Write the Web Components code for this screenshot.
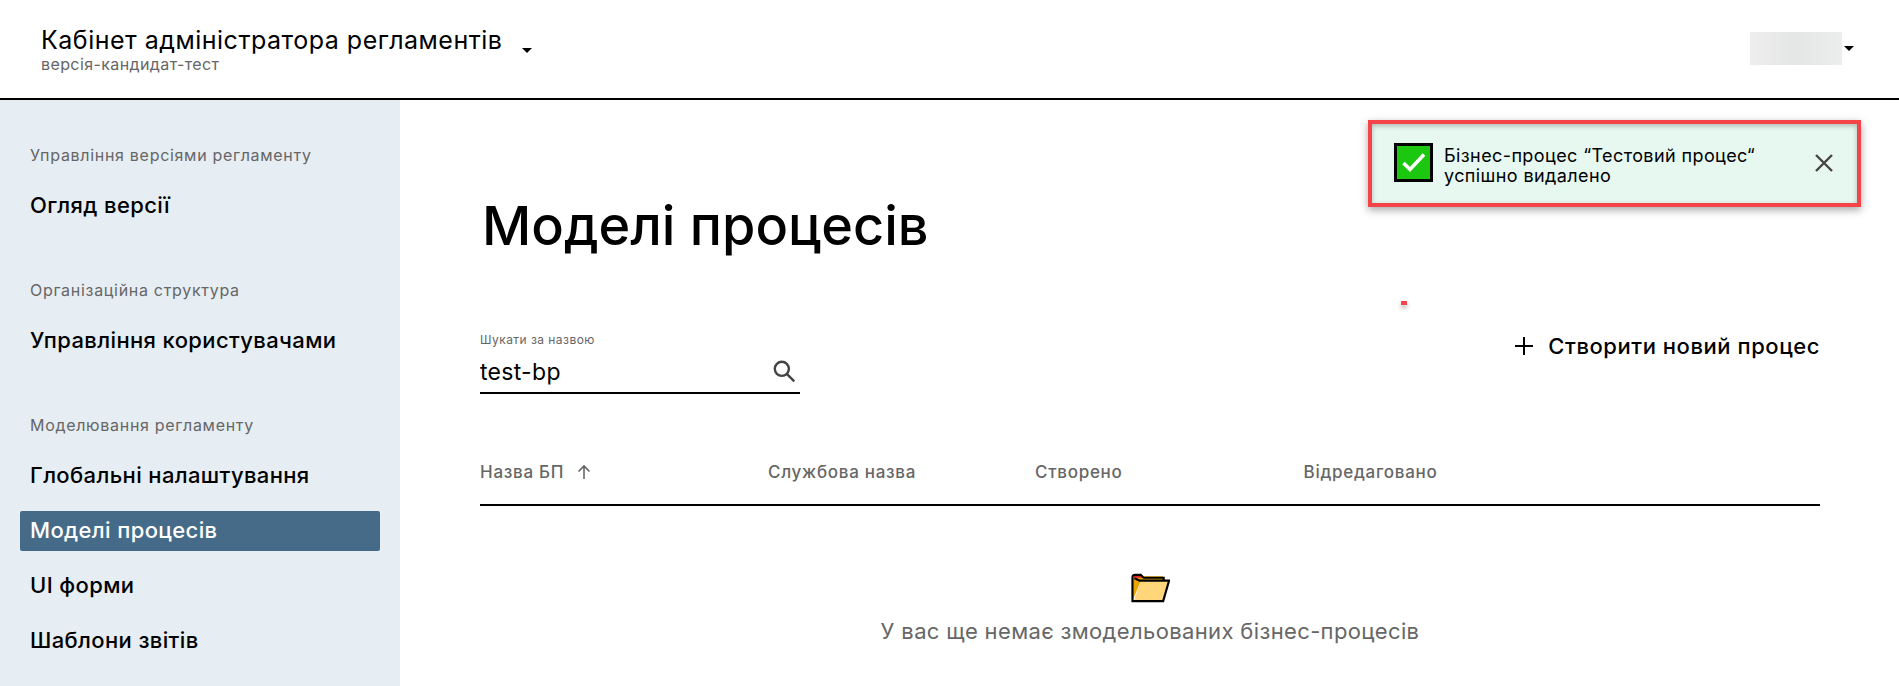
<!DOCTYPE html>
<html lang="uk"><head><meta charset="utf-8"><title>Моделі процесів</title>
<style>
html,body{margin:0;height:686px;overflow:hidden;background:#fff;font-family:Inter,"Noto Sans",sans-serif;}
</style></head><body>
<app-shell>
  <app-header slot="header"></app-header>
  <side-nav slot="side"></side-nav>
  <process-page slot="main"></process-page>
  <toast-note slot="over"></toast-note>
</app-shell>
<script>
const F='Inter,"Noto Sans",sans-serif';
function def(name,html){customElements.define(name,class extends HTMLElement{constructor(){super();this.attachShadow({mode:'open'}).innerHTML=html(this);}});}
def('app-shell',()=>`<style>:host{display:grid;grid-template:100px 586px/400px 1fr;width:1899px;height:686px;position:relative;overflow:hidden}
::slotted([slot=header]){grid-column:1/3}</style>
<slot name="header"></slot><slot name="side"></slot><slot name="main"></slot><slot name="over"></slot>`);
def('app-header',()=>`<style>:host{display:flex;box-sizing:border-box;height:100px;border-bottom:2px solid #000;align-items:flex-start;padding:0 45px 0 41px;justify-content:space-between;font-family:${F}}
.l{display:flex;padding-top:25px}.t{font-size:25px;line-height:30px;color:#000;letter-spacing:.5px}.s{font-size:16px;line-height:18px;color:#666;letter-spacing:.4px}
.c{width:0;height:0;border:5px solid transparent;border-top-color:#000;border-bottom:0}
.l .c{margin:23px 0 0 20px}.r{display:flex;align-items:center;padding-top:32px;gap:2px}
.a{width:92px;height:33px;background:linear-gradient(90deg,#eeeeee,#e4e5e5 50%,#eceded)}</style>
<div class="l"><div><div class="t">Кабінет адміністратора регламентів</div><div class="s">версія-кандидат-тест</div></div><i class="c"></i></div>
<div class="r"><div class="a"></div><i class="c"></i></div>`);
def('nav-group',e=>`<style>:host{display:block;margin-bottom:54px}.h{font-size:16px;line-height:20px;color:#666;padding-left:10px;margin-bottom:21px;letter-spacing:.7px}
.b{display:flex;flex-direction:column;gap:15px}</style><div class="h">${e.getAttribute('label')}</div><div class="b"><slot></slot></div>`);
def('nav-item',e=>`<style>:host{display:block}div{height:40px;line-height:39px;padding-left:10px;font-size:22px;letter-spacing:.37px;font-weight:500;color:#000;border-radius:2px}
:host([active]) div{background:#466b88;color:#fff}</style><div><slot></slot></div>`);
def('side-nav',()=>`<style>:host{display:block;box-sizing:border-box;height:586px;background:#e6edf3;padding:45px 20px 0;font-family:${F};overflow:hidden}</style>
<nav-group label="Управління версіями регламенту"><nav-item>Огляд версії</nav-item></nav-group>
<nav-group label="Організаційна структура"><nav-item>Управління користувачами</nav-item></nav-group>
<nav-group label="Моделювання регламенту"><nav-item>Глобальні налаштування</nav-item><nav-item active>Моделі процесів</nav-item><nav-item>UI форми</nav-item><nav-item>Шаблони звітів</nav-item></nav-group>`);
def('process-page',()=>`<style>:host{display:block;box-sizing:border-box;padding:0 79px 0 80px;font-family:${F};height:586px;overflow:hidden}
h1{margin:90px 0 0 2px;font-size:54px;line-height:72px;font-weight:500;color:#000}
.bar{display:flex;justify-content:space-between;margin-top:69px}
.f{width:320px;border-bottom:2px solid #000;box-sizing:border-box;height:63px}
.f label{display:block;font-size:12px;line-height:16px;color:#666;margin-top:1px;letter-spacing:.45px}
.v{display:flex;justify-content:space-between;align-items:center;font-size:23px;letter-spacing:.3px;line-height:32px;color:#000;margin-top:7px;padding-right:3px}
.v span{margin-top:1px}.v svg{margin-top:-2px}
.n{display:flex;align-items:center;gap:15px;font-size:22px;letter-spacing:.55px;font-weight:500;line-height:30px;color:#000;height:30px}
.th{display:grid;grid-template-columns:288px 267px 268.500px 1fr;height:64px;margin-top:46px;align-items:center;border-bottom:2px solid #000;font-size:17px;letter-spacing:.72px;font-weight:500;color:#666}
.th>div{display:flex;align-items:center;gap:13px}
.e{display:flex;flex-direction:column;align-items:center;margin-top:67px;gap:15px;font-size:22px;letter-spacing:.36px;color:#666}
svg{display:block}</style>
<h1>Моделі процесів</h1>
<div class="bar"><div class="f"><label>Шукати за назвою</label><div class="v"><span>test-bp</span>
<svg width="26" height="26" viewBox="0 0 24 24" fill="none" stroke="#444" stroke-width="2.2"><circle cx="10" cy="10" r="6.500"/><path d="M14.800 14.800 21.500 21.500"/></svg></div></div>
<div class="n"><svg width="18" height="18" viewBox="0 0 18 18" stroke="#000" stroke-width="2"><path d="M9 0v18M0 9h18"/></svg><span>Створити новий процес</span></div></div>
<div class="th"><div>Назва БП<svg width="14" height="16" viewBox="0 0 14 16" fill="none" stroke="#666" stroke-width="1.6"><path d="M7 15V2M1.500 7.500 7 2l5.500 5.500"/></svg></div><div>Службова назва</div><div>Створено</div><div>Відредаговано</div></div>
<div class="e"><svg width="39" height="30" viewBox="0 0 40 30"><path d="M2 3h31v5H10L2 27z" fill="#eaa400"/><path d="M3 2.500h7l2 2H3z" fill="#e0262b"/><path d="M10 8h28l-5 20H3z" fill="#ffd679"/><path d="M1.500 28.500V4q0-2.500 2.500-2.500h6l3 3h20.500V7.500h5.500L33 28.500zM33.500 7.500H9L3.500 5" fill="none" stroke="#000" stroke-width="2.200"/></svg><div>У вас ще немає змодельованих бізнес-процесів</div></div>`);
def('toast-note',()=>`<style>:host{position:absolute;left:1368px;top:120px;width:493px;height:87px;box-sizing:border-box;border:4px solid #f44447;background:#e7f8f0;box-shadow:0 3px 8px rgba(0,0,0,.35),inset 0 2px 5px rgba(0,0,0,.25);display:flex;align-items:center;padding:0 23px 0 22px;font-family:${F};font-size:18px;letter-spacing:.4px;line-height:20px;color:#000}
.k{flex:none;width:39px;height:39px;box-sizing:border-box;border:3px solid #000;background:#1cc70f;margin-right:11px;margin-top:-2px}
.t{flex:1;margin-top:4px}
.x{flex:none;margin-top:-2px}
.d{position:absolute;left:29px;top:177px;width:6px;height:4px;background:#f44447;box-shadow:0 3px 4px rgba(0,0,0,.3)}svg{display:block}</style>
<div class="k"><svg width="33" height="33" viewBox="0 0 33 33" fill="none" stroke="#fff" stroke-width="3.600"><path d="M6.500 17l6.500 6.500L27 8.500"/></svg></div>
<div class="t">Бізнес-процес “Тестовий процес“<br>успішно видалено</div>
<svg class="x" width="20" height="20" viewBox="0 0 20 20" stroke="#444" stroke-width="2.400"><path d="M2 2l16 16M18 2 2 18"/></svg><i class="d"></i>`);
</script></body></html>
